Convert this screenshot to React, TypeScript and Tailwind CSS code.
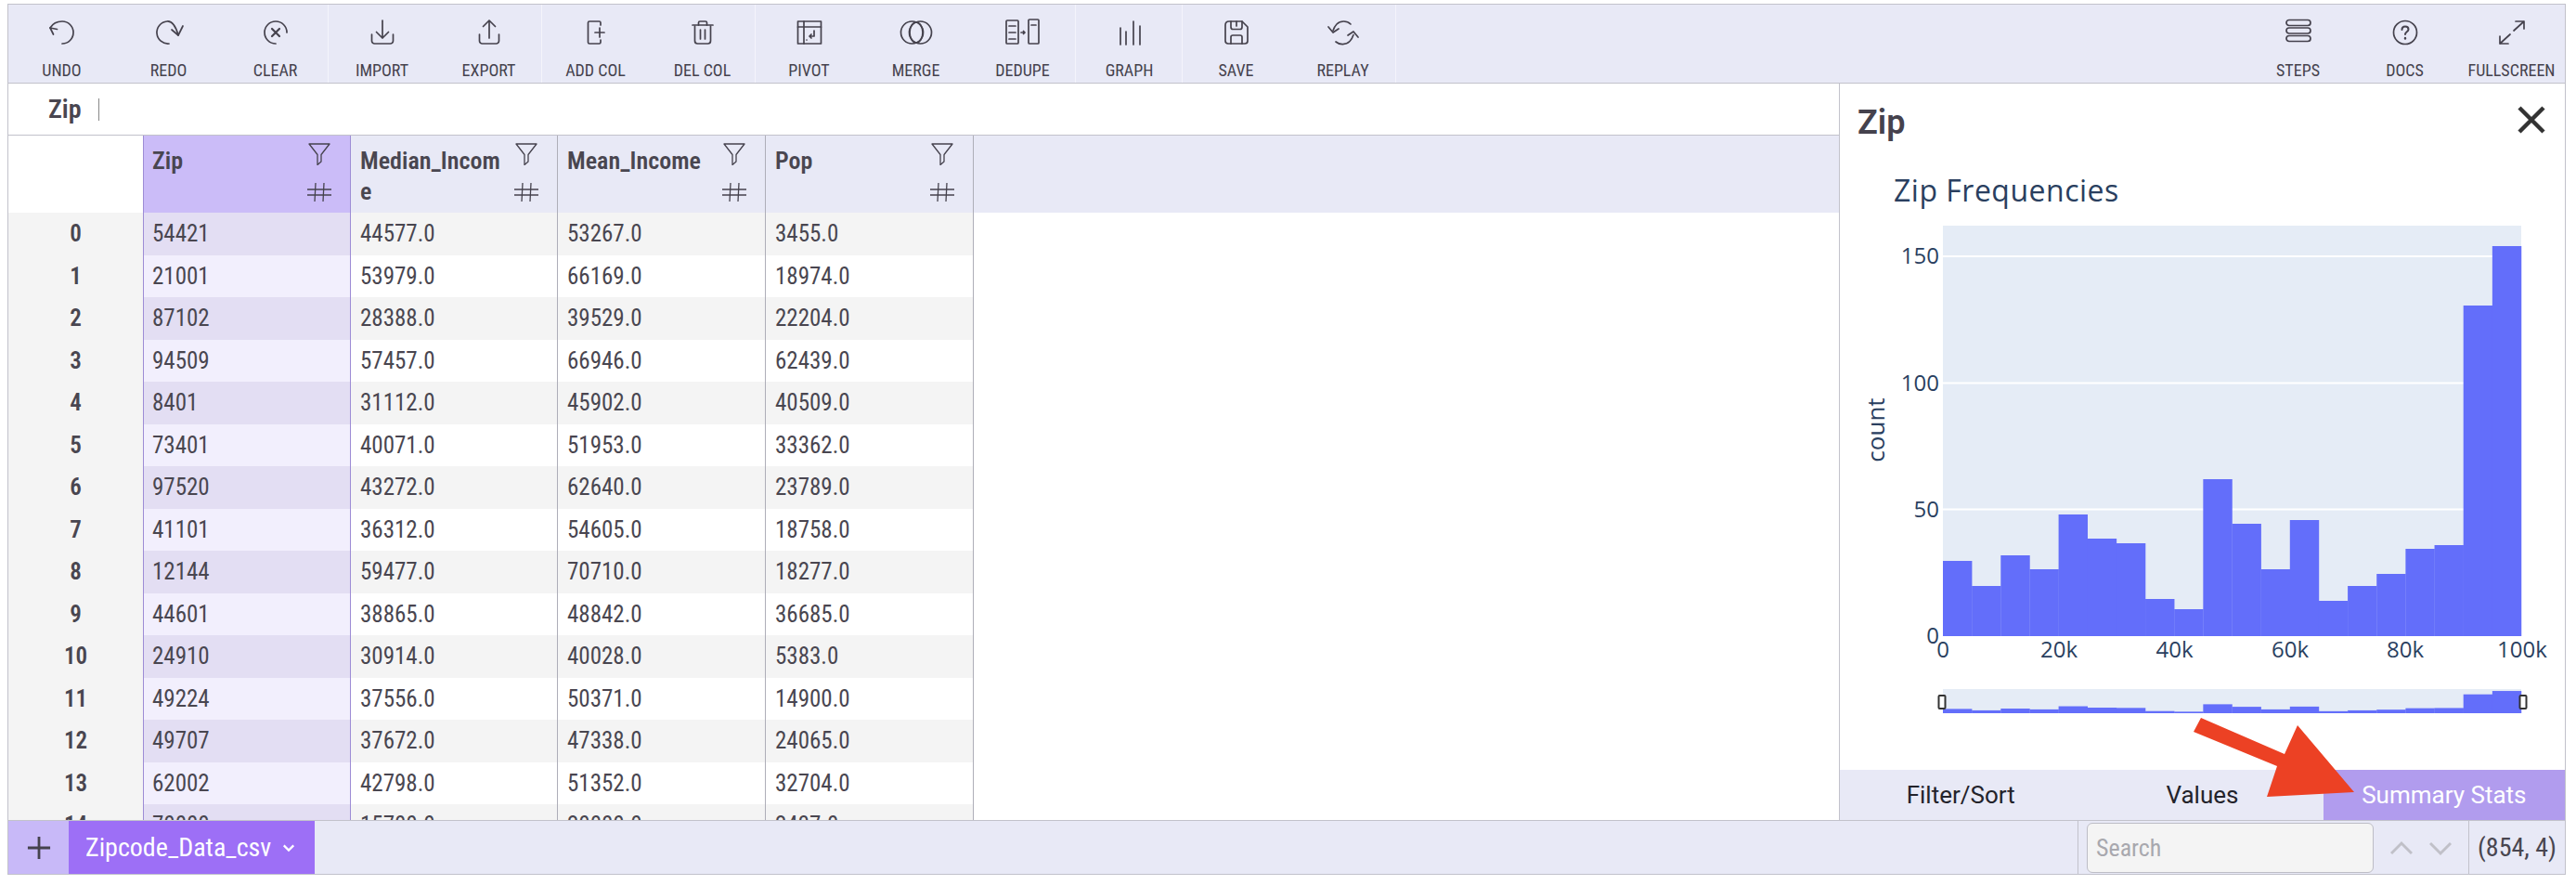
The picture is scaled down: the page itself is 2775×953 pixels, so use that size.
const rows = [
  ['54421', '44577.0', '53267.0', '3455.0'],
  ['21001', '53979.0', '66169.0', '18974.0'],
  ['87102', '28388.0', '39529.0', '22204.0'],
  ['94509', '57457.0', '66946.0', '62439.0'],
  ['8401', '31112.0', '45902.0', '40509.0'],
  ['73401', '40071.0', '51953.0', '33362.0'],
  ['97520', '43272.0', '62640.0', '23789.0'],
  ['41101', '36312.0', '54605.0', '18758.0'],
  ['12144', '59477.0', '70710.0', '18277.0'],
  ['44601', '38865.0', '48842.0', '36685.0'],
  ['24910', '30914.0', '40028.0', '5383.0'],
  ['49224', '37556.0', '50371.0', '14900.0'],
  ['49707', '37672.0', '47338.0', '24065.0'],
  ['62002', '42798.0', '51352.0', '32704.0'],
  ['70000', '15700.0', '20000.0', '2437.0'],
];

const barTops = [604, 631, 598, 613, 554, 580, 585, 645, 656, 516, 564, 613, 560, 647, 631, 618, 591, 587, 329, 265];

function Ico({ children }: { children: React.ReactNode }) {
  return (
    <svg viewBox="0 0 32 32" className="h-[32px] w-[32px] overflow-visible" fill="none" stroke="#45424d" strokeWidth="1.7" strokeLinecap="round" strokeLinejoin="round">
      {children}
    </svg>
  );
}

const toolGroups = [
  [
    { label: 'UNDO', icon: <Ico><path d="M3 11C6 6 11 4 16 4a12 12 0 0 1 0 24" /><path d="M3 11l7.500 1.500M3 11l3.500 7" /></Ico> },
    { label: 'REDO', icon: <Ico><path d="M16 28A12 12 0 0 1 14 4c5-.5 9 4 12 15" /><path d="M19 13l7 6 5-10" /></Ico> },
    { label: 'CLEAR', icon: <Ico><path d="M28 16A12 12 0 1 0 16 28" /><path d="M12 12l8 8M20 12l-8 8" strokeWidth="2.200" /></Ico> },
  ],
  [
    { label: 'IMPORT', icon: <Ico><path d="M16 3v19M9.500 15.500 16 22l6.500-6.500" /><path d="M4.500 18v7a3 3 0 0 0 3 3h17a3 3 0 0 0 3-3v-7" /></Ico> },
    { label: 'EXPORT', icon: <Ico><path d="M16 22V3M9.500 9.500 16 3l6.500 6.500" /><path d="M5.500 18v7a3 3 0 0 0 3 3h15a3 3 0 0 0 3-3v-7" /></Ico> },
  ],
  [
    { label: 'ADD COL', icon: <Ico><path d="M21 8V5.500C21 4.500 20.500 4 19.500 4H9C8 4 7.500 4.500 7.500 5.500v21c0 1 .5 1.500 1.500 1.500h10.500c1 0 1.500-.5 1.500-1.500V24" /><path d="M20 11v10M15 16h10" /></Ico> },
    { label: 'DEL COL', icon: <Ico><path d="M5 8h22" /><path d="M11.500 8V5.500C11.500 4.500 12 4 13 4h6c1 0 1.500.5 1.500 1.500V8" /><path d="M7.500 9v16c0 2 1 3 3 3h11c2 0 3-1 3-3V9" /><path d="M13.500 13v10M18.500 13v10" /></Ico> },
  ],
  [
    { label: 'PIVOT', icon: <Ico><rect x="3.500" y="4" width="25" height="24" /><path d="M3.500 10h25M10 4v24" /><path d="M21 14v6h-5M18 18l-2 2 2 2M13 24h0" /></Ico> },
    { label: 'MERGE', icon: <Ico><circle cx="11.500" cy="16" r="12" /><circle cx="20.500" cy="16" r="12" /><ellipse cx="16" cy="16" rx="7" ry="11" /></Ico> },
    { label: 'DEDUPE', icon: <Ico><rect x="-2" y="3" width="13" height="25" rx="1" /><rect x="22" y="2" width="11" height="26" rx="1" /><path d="M1 9h7M1 16h7M1 23h7M25 8h5M14 16h4M16.500 14.500 18 16l-1.500 1.500" /></Ico> },
  ],
  [
    { label: 'GRAPH', icon: <Ico><path d="M6 29V11M12 29V15M20 29V4M27 29V9" /></Ico> },
  ],
  [
    { label: 'SAVE', icon: <Ico><path d="M8 4h14l6 6v15c0 2-1 3-3 3H7c-2 0-3-1-3-3V8c0-2 1-4 4-4Z" /><path d="M10 4v6c0 2 .5 2.500 2 2.500h8c1.500 0 2-.5 2-2.500V4M16 4v5" /><path d="M10 28v-7c0-1.500 .5-2 2-2h8c1.500 0 2 .5 2 2v7" /></Ico> },
    { label: 'REPLAY', icon: <Ico><path d="M24 7C20 3 13 3 9 7c-2 2-3 4-4 7" /><path d="M0 10l5 6 6-4" /><path d="M8 26c4 3.500 11 3.500 15-.5 2-2 3-4 4-7" /><path d="M32 21l-5-6-6 4" /></Ico> },
  ],
];

const rightTools = [
  { label: 'STEPS', icon: <Ico><rect x="3" y="2.500" width="26" height="6" rx="3" /><rect x="3" y="11" width="26" height="6" rx="3" /><rect x="3" y="19.500" width="26" height="6" rx="3" /></Ico> },
  { label: 'DOCS', icon: <Ico><circle cx="16" cy="16" r="12.500" /><path d="M12.500 13c0-2 1.500-3.500 3.500-3.500s3.500 1.300 3.500 3.200c0 2.600-3.500 2.600-3.500 5.300" strokeWidth="2" /><path d="M16 22v.5" strokeWidth="2.400" /></Ico> },
  { label: 'FULLSCREEN', icon: <Ico><path d="M18 14 29 4M20 4h9v8M14 18 3 28M3 20v8h9" /></Ico> },
];

function ToolButton({ label, icon }: { label: string; icon: React.ReactNode }) {
  return (
    <div className="flex w-[115px] flex-col items-center pt-[14px]">
      {icon}
      <span className="mt-[15px] text-[18px] leading-[20px] text-[#45424d] [font-stretch:85%]">{label}</span>
    </div>
  );
}

function HeaderCell({ title, selected, widthClass }: { title: string; selected?: boolean; widthClass: string }) {
  return (
    <div
      className={`relative box-border border-r ${widthClass} ${
        selected ? 'border-l border-[#9d8cd5] bg-[#cbbcf8] pl-[9px]' : 'border-[#aeaeb8] bg-[#e8e9f6] pl-[10px]'
      }`}
    >
      <div className="w-[160px] pt-[11px] text-[26px] leading-[33px] font-semibold break-all text-[#494650] [font-stretch:85%]">{title}</div>
      <svg viewBox="0 0 24 24" className="absolute top-[8px] right-[21px] h-[24px] w-[24px]" fill="none" stroke="#45424d" strokeWidth="1.300" strokeLinejoin="round">
        <path d="M1 1h22L14 12.500V20l-4 3.500v-11Z" />
      </svg>
      <svg viewBox="0 0 26 20" className="absolute top-[51px] right-[20px] h-[20px] w-[26px]" fill="none" stroke="#45424d" strokeWidth="1.300">
        <path d="M0 7h26M0 13h26M9 0 8 20M18 0l-1 20" />
      </svg>
    </div>
  );
}

export default function App() {
  return (
    <div className="h-[953px] w-full bg-white pt-[4px] pl-[8px] font-['Roboto',sans-serif]">
      <div className="relative box-border flex h-[938px] w-[2756px] flex-col border border-[#c2c2cb]">
        {/* toolbar */}
        <div className="box-border flex h-[85px] shrink-0 justify-between border-b border-[#c2c2cb] bg-[#e8e9f6]">
          <div className="flex">
            {toolGroups.map((group, i) => (
              <div key={i} className="flex shadow-[inset_-1px_0_0_#f4f4fb]">
                {group.map((t) => (
                  <ToolButton key={t.label} label={t.label} icon={t.icon} />
                ))}
              </div>
            ))}
          </div>
          <div className="flex">
            {rightTools.map((t) => (
              <ToolButton key={t.label} label={t.label} icon={t.icon} />
            ))}
          </div>
        </div>

        {/* middle */}
        <div className="flex min-h-0 flex-1">
          <div className="flex w-[1972px] shrink-0 flex-col overflow-hidden">
            <div className="box-border flex h-[56px] shrink-0 items-center border-b border-[#c2c2cb] pl-[43px] text-[28px] font-semibold text-[#494650] [font-stretch:85%]">
              Zip
              <span className="ml-[18px] h-[24px] w-px bg-[#888]" />
            </div>
            <div className="flex h-[83px] shrink-0 bg-[#e8e9f6]">
              <div className="w-[145px] bg-white" />
              <HeaderCell title="Zip" selected widthClass="w-[224px]" />
              <HeaderCell title="Median_Income" widthClass="w-[223px]" />
              <HeaderCell title="Mean_Income" widthClass="w-[224px]" />
              <HeaderCell title="Pop" widthClass="w-[224px]" />
            </div>
            {rows.map((r, i) => (
              <div key={i} className="flex h-[45.500px] shrink-0 items-center text-[25px] text-[#494650] [font-stretch:85%]">
                <div className="flex h-full w-[145px] items-center justify-center bg-[#f4f4f4] font-semibold">{i}</div>
                <div className={`box-border flex h-full w-[224px] items-center border-x border-[#9d8cd5] pl-[9px] ${i % 2 ? 'bg-[#f2effd]' : 'bg-[#e3def3]'}`}>{r[0]}</div>
                <div className={`box-border flex h-full w-[223px] items-center border-r border-[#aeaeb8] pl-[10px] ${i % 2 ? 'bg-white' : 'bg-[#f4f4f4]'}`}>{r[1]}</div>
                <div className={`box-border flex h-full w-[224px] items-center border-r border-[#aeaeb8] pl-[10px] ${i % 2 ? 'bg-white' : 'bg-[#f4f4f4]'}`}>{r[2]}</div>
                <div className={`box-border flex h-full w-[224px] items-center border-r border-[#aeaeb8] pl-[10px] ${i % 2 ? 'bg-white' : 'bg-[#f4f4f4]'}`}>{r[3]}</div>
              </div>
            ))}
          </div>

          {/* summary panel */}
          <div className="box-border flex min-w-0 flex-1 flex-col border-l border-[#c2c2cb]">
            <div className="flex h-[78px] shrink-0 items-center justify-between pr-[20px] pl-[19px]">
              <span className="pt-[6px] text-[36px] font-semibold text-[#45424d]">Zip</span>
              <svg viewBox="0 0 32 32" className="h-[32px] w-[32px]" stroke="#333" strokeWidth="4.500" fill="none">
                <path d="M3 3l26 26M29 3 3 29" />
              </svg>
            </div>
            <div className="flex-1">
              <svg width="782" height="660" viewBox="1981 168 782 660" className="block" style={{ fontFamily: '"Open Sans", sans-serif' }}>
                <text x="2039" y="217" fontSize="32" letterSpacing="0.5" fill="#2a3f5f">Zip Frequencies</text>
                <rect x="2092" y="243" width="623" height="442" fill="#e5ecf6" />
                {[276, 412.500, 548.500].map((y) => (
                  <line key={y} x1="2092" x2="2715" y1={y} y2={y} stroke="#ffffff" strokeWidth="2" />
                ))}
                {barTops.map((top, i) => (
                  <rect key={i} x={2092 + i * 31.150} y={top} width="31.400" height={685 - top} fill="#636efa" />
                ))}
                {[['150', 276], ['100', 412.500], ['50', 548.500], ['0', 685]].map(([t, y]) => (
                  <text key={t} x="2088" y={Number(y) + 8} textAnchor="end" fontSize="24" fill="#2a3f5f">{t}</text>
                ))}
                {[['0', 2092], ['20k', 2217], ['40k', 2341.500], ['60k', 2466], ['80k', 2590], ['100k', 2716]].map(([t, x]) => (
                  <text key={t} x={x} y="708" textAnchor="middle" fontSize="24" fill="#2a3f5f">{t}</text>
                ))}
                <text transform="translate(2029 463) rotate(-90)" textAnchor="middle" fontSize="26" fill="#2a3f5f">count</text>
                {/* range slider */}
                <rect x="2092" y="742" width="623" height="26" fill="#e5ecf6" />
                {barTops.map((top, i) => (
                  <rect key={i} x={2092 + i * 31.150} y={768 - (685 - top) * 0.057} width="31.400" height={(685 - top) * 0.057} fill="#636efa" />
                ))}
                <rect x="2087.500" y="749" width="7" height="14" rx="1" fill="#fff" stroke="#333" strokeWidth="2" />
                <rect x="2713.500" y="749" width="7" height="14" rx="1" fill="#fff" stroke="#333" strokeWidth="2" />
              </svg>
            </div>
            <div className="grid h-[54px] shrink-0 grid-cols-3 bg-[#e8e9f6] text-[26px] [font-stretch:94%]">
              <div className="flex items-center justify-center text-[#23232b]">Filter/Sort</div>
              <div className="flex items-center justify-center text-[#23232b]">Values</div>
              <div className="flex items-center justify-center bg-[#b19cee] text-white">Summary Stats</div>
            </div>
          </div>
        </div>

        {/* footer */}
        <div className="box-border flex h-[58px] shrink-0 border-t border-[#c2c2cb] bg-[#e8e9f6]">
          <div className="flex w-[65px] items-center justify-center bg-[#c8b9f8]">
            <svg viewBox="0 0 28 28" className="h-[26px] w-[26px]" stroke="#45424d" strokeWidth="3">
              <path d="M14 1v26M1 14h26" />
            </svg>
          </div>
          <div className="flex w-[265px] items-center bg-[#9d6ff6] pl-[18px] text-[28px] text-white [font-stretch:85%]">
            Zipcode_Data_csv
            <svg viewBox="0 0 16 16" className="ml-[12px] h-[14px] w-[14px]" fill="none" stroke="#fff" strokeWidth="2.500">
              <path d="M2 5l6 6 6-6" />
            </svg>
          </div>
          <div className="flex-1" />
          <div className="box-border flex w-[421px] items-center border-l border-[#c2c2cb] pl-[9px]">
            <input
              placeholder="Search"
              className="box-border h-[54px] w-[309px] rounded-[6px] border border-[#bdbdc6] bg-[#f4f4f4] pl-[9px] text-[26px] outline-none [font-stretch:85%] placeholder:text-[#a8a8ae]"
            />
            <svg viewBox="0 0 24 24" className="ml-[18px] h-[24px] w-[24px]" fill="none" stroke="#c0c0c8" strokeWidth="3">
              <path d="M1 18 12 7l11 11" />
            </svg>
            <svg viewBox="0 0 24 24" className="ml-[18px] h-[24px] w-[24px]" fill="none" stroke="#c0c0c8" strokeWidth="3">
              <path d="M1 7l11 11L23 7" />
            </svg>
          </div>
          <div className="box-border flex w-[104px] items-center justify-center border-l border-[#c2c2cb] text-[28px] text-[#494650] [font-stretch:85%]">(854, 4)</div>
        </div>

        {/* arrow annotation drawn on top of the screenshot */}
        <svg className="pointer-events-none absolute top-[-5px] left-[-9px]" width="2775" height="953" viewBox="0 0 2775 953">
          <polygon points="2371,773 2363,788 2453,825 2442,858 2536,853 2475,781 2461,812" fill="#ec4124" />
        </svg>
      </div>
    </div>
  );
}
